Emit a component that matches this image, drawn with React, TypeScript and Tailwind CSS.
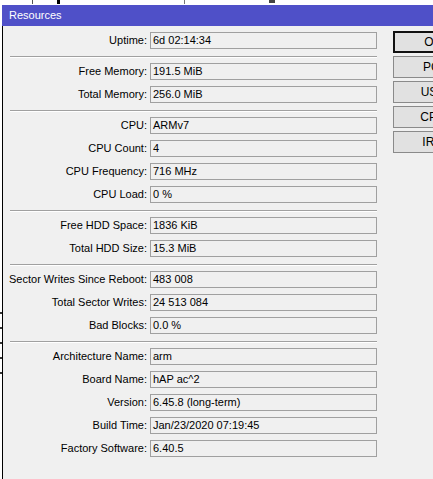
const groups: [string, string][][] = [
  [["Uptime", "6d 02:14:34"]],
  [
    ["Free Memory", "191.5 MiB"],
    ["Total Memory", "256.0 MiB"],
  ],
  [
    ["CPU", "ARMv7"],
    ["CPU Count", "4"],
    ["CPU Frequency", "716 MHz"],
    ["CPU Load", "0 %"],
  ],
  [
    ["Free HDD Space", "1836 KiB"],
    ["Total HDD Size", "15.3 MiB"],
  ],
  [
    ["Sector Writes Since Reboot", "483 008"],
    ["Total Sector Writes", "24 513 084"],
    ["Bad Blocks", "0.0 %"],
  ],
  [
    ["Architecture Name", "arm"],
    ["Board Name", "hAP ac^2"],
    ["Version", "6.45.8 (long-term)"],
    ["Build Time", "Jan/23/2020 07:19:45"],
    ["Factory Software", "6.40.5"],
  ],
];

const buttons = ["OK", "PCI", "USB", "CPU", "IRQ"];

function Field({ label, value }: { label: string; value: string }) {
  return (
    <div className="flex h-[17px] items-center">
      <div className="w-[144px] shrink-0 text-right leading-none">{label}:</div>
      <div className="ml-[3px] flex h-[17px] w-[227px] shrink-0 items-center border border-[#a0a0a0] pl-[2px] leading-none">
        {value}
      </div>
    </div>
  );
}

export default function App() {
  return (
    <div className="h-[479px] w-[433px] overflow-hidden bg-white font-['Liberation_Sans',Arial,sans-serif] text-[11px] text-black">
      {/* desktop behind the window */}
      <div className="flex h-[5px] items-start gap-[24px] pl-[32px]">
        <div className="h-[4px] w-[1px] bg-[#555]" />
        <div className="h-[4px] w-[3px] bg-black" />
        <div className="ml-[100px] h-[4px] w-[1px] bg-[#777]" />
        <div className="ml-[60px] h-[3px] w-[6px] bg-[#444]" />
      </div>

      <div className="flex">
        <div className="flex w-[2px] shrink-0 flex-col gap-[13px] pt-[307px]">
          <div className="h-[2px] w-[2px] bg-[#333]" />
          <div className="h-[2px] w-[2px] bg-[#333]" />
          <div className="h-[2px] w-[2px] bg-[#333]" />
          <div className="h-[2px] w-[2px] bg-[#333]" />
          <div className="h-[2px] w-[2px] bg-[#333]" />
        </div>

        {/* window */}
        <div className="flex w-[520px] shrink-0 flex-col">
          <div className="flex h-[21px] items-center bg-[#4f50c8] pl-[7px] text-[11px] text-white">Resources</div>
          <div className="flex h-[460px] border-l border-black bg-[#f0f0f0]">
            <div className="flex flex-col pt-[6px]">
              {groups.map((g, i) => (
                <div key={i} className="flex flex-col">
                  {i > 0 && (
                    <div className="mb-[5px] ml-[7px] mt-[7px] h-[2px] w-[367px] border-t border-b border-t-[#a0a0a0] border-b-white" />
                  )}
                  <div className="flex flex-col gap-[6px]">
                    {g.map(([l, v]) => (
                      <Field key={l} label={l} value={v} />
                    ))}
                  </div>
                </div>
              ))}
            </div>

            <div className="ml-[16px] flex flex-col gap-[3px] pt-[5px]">
              {buttons.map((b, i) => (
                <div
                  key={b}
                  className={
                    i === 0
                      ? "flex h-[22px] w-[80px] items-center justify-center border-2 border-[#111] bg-[#e1e1e1] text-[12px]"
                      : "flex h-[22px] w-[80px] items-center justify-center border border-[#8a8a8a] bg-[#e1e1e1] text-[12px]"
                  }
                >
                  {b}
                </div>
              ))}
            </div>
          </div>
        </div>
      </div>
    </div>
  );
}
